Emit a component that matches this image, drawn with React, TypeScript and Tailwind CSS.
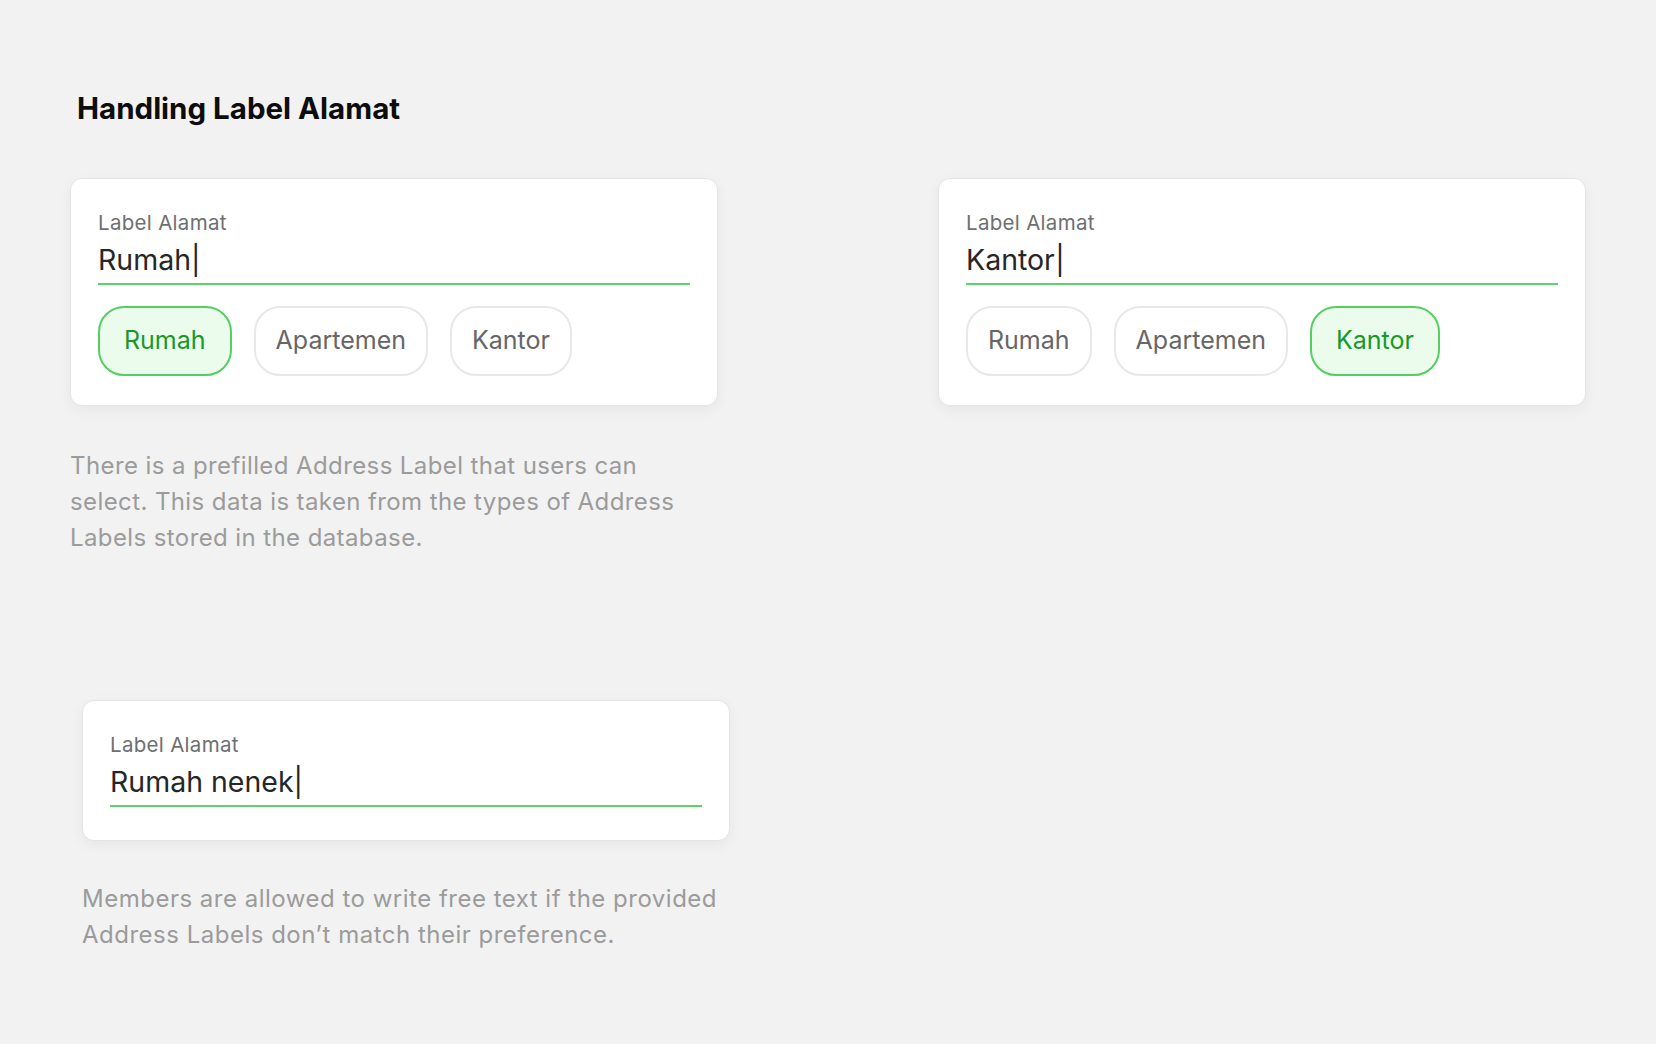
const options = ["Rumah", "Apartemen", "Kantor"];

function Chip({ label, active }: { label: string; active: boolean }) {
    return (
        <div
            className={
                active
                    ? "flex h-[70px] items-center rounded-[26px] border-2 border-[#55cf62] bg-[#ebfcec] px-[24px] text-[25px] text-[#169a25]"
                    : "flex h-[70px] items-center rounded-[26px] border-2 border-[#e8e8e8] bg-white px-[20px] text-[25px] text-[#666666]"
            }
        >
            {label}
        </div>
    );
}

function LabelCard({ value, selected, className }: { value: string; selected?: string; className?: string }) {
    return (
        <div
            className={`w-[648px] rounded-[12px] border border-[#e4e4e4] bg-white px-[27px] pt-[32px] shadow-[0_4px_14px_rgba(0,0,0,0.05)] ${className ?? ""}`}
        >
            <div className="text-[20.5px] leading-[24px] tracking-[0.3px] text-[#6f6f6f]">Label Alamat</div>
            <div className="mt-[8px] border-b-2 border-[#5dd26a] pb-[6px] text-[28.5px] leading-[34px] text-[#262626]">
                {value}|
            </div>
            {selected ? (
                <div className="mt-[21px] flex gap-[22px] pb-[29px]">
                    {options.map((o) => (
                        <Chip key={o} label={o} active={o === selected} />
                    ))}
                </div>
            ) : (
                <div className="pb-[33px]" />
            )}
        </div>
    );
}

export default function App() {
    return (
        <div className="min-h-screen bg-[#f2f2f2] pl-[70px] pt-[91px] font-['Inter',sans-serif]">
            <h1 className="ml-[7px] text-[29.5px] font-bold leading-[34px] text-[#0d0d0d]">Handling Label Alamat</h1>

            <div className="mt-[53px] flex gap-[220px]">
                <LabelCard value="Rumah" selected="Rumah" />
                <LabelCard value="Kantor" selected="Kantor" />
            </div>

            <p className="mt-[42px] w-[630px] text-[24px] leading-[36px] tracking-[0.4px] text-[#9b9b9b]">
                There is a prefilled Address Label that users can select. This data is taken from the types of Address
                Labels stored in the database.
            </p>

            <LabelCard value="Rumah nenek" className="ml-[12px] mt-[144px]" />

            <p className="ml-[12px] mt-[40px] w-[680px] text-[24px] leading-[36px] tracking-[0.5px] text-[#9b9b9b]">
                Members are allowed to write free text if the provided Address Labels don’t match their preference.
            </p>
        </div>
    );
}
